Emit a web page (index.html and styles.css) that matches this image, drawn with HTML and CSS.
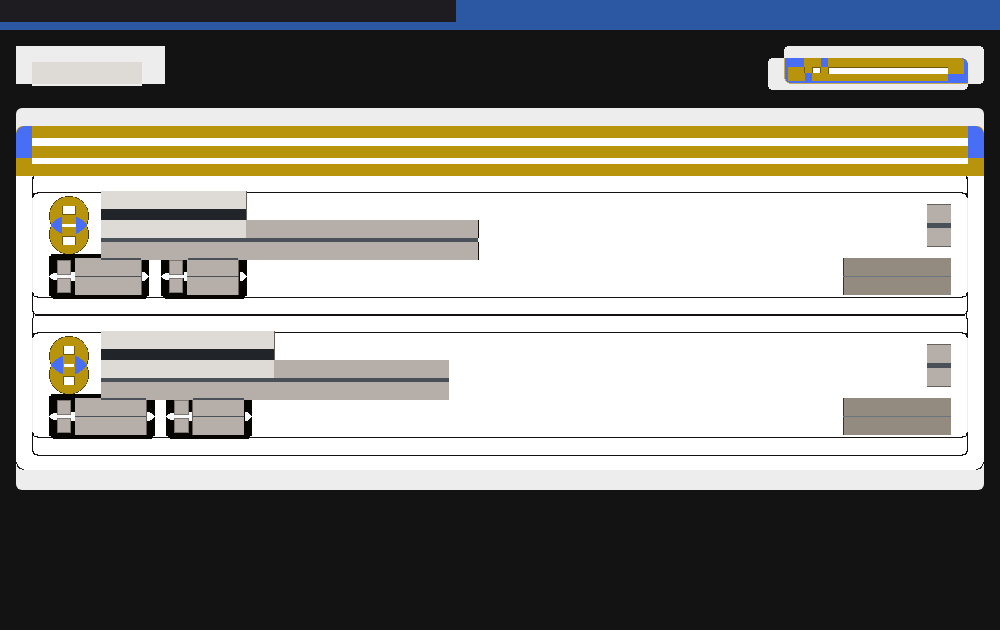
FILE: index.html
```html
<!DOCTYPE html>
<html lang="en">
<head>
<meta charset="utf-8">
<title>Overview</title>
<link rel="stylesheet" href="styles.css">
</head>
<body>
<div class="topbar"><div class="topbar-progress"></div></div>
<header class="header">
  <div class="title"><div class="title-block"></div></div>
  <svg class="action" width="216" height="44" viewBox="768 46 216 44">
    <rect class="surface" x="784" y="46" width="200" height="38" rx="5"/>
    <rect class="surface" x="768" y="58" width="200" height="32" rx="5"/>
    <path class="edge" d="M784 58H961Q968 58 968 66V84H792Q784 84 784 75Z"/>
    <path class="blue" d="M785 58H960Q967 58 968 65V83H792Q785 83 785 75Z"/>
    <path class="gold" d="M804 58h17v9h7v-9h133q3 1 3 3v13h-16v7h-136v-8h-7v8h-17v-14h16z"/>
    <path class="olive" d="M804 67h1v6h-1zM812 67h9v6h-9zM828 67h120v1h-119v6h-1z"/>
    <path class="white" d="M813 68h7v5h-7zM829 68h119v6h-119z"/>
  </svg>
</header>
<main class="panel">
  <div class="sheet">
    <div class="band">
      <div class="band-side"></div>
      <div class="band-lines"><i></i><i></i></div>
      <div class="band-side band-side-right"></div>
    </div>
    <div class="cards">
      <svg class="card" width="936" height="140" viewBox="32 176 936 140">
        <path class="side" d="M32 198h1v94h-1zM967 198h1v94h-1z"/>
        <path class="ink" d="M33 176h1v1h-1zM32 177h1v21h-1zM33 177h1v2h-1zM966 176h1v3h-1zM967 177h1v21h-1zM37 192H963v1H37zM33 193h5v1h-3v1h-1v2h-1zM967 193h-5v1h3v1h1v2h1zM32 292h1v20h-1zM967 292h1v20h-1zM37 297H963v1H37zM33 293h1v3h4v1h-4v-1h-1zM967 293h-1v3h-4v1h4v-1h1zM35 314H965v2H35zM33 311h1v2h1v1h-1v2h-1zM967 311h-1v2h-1v1h1v2h1z"/>
        <g>
          <circle class="rim" cx="69" cy="216" r="20"/><circle class="rim" cx="69" cy="234.5" r="20"/>
          <circle class="gold" cx="69" cy="216" r="19.400"/><circle class="gold" cx="69" cy="234.500" r="19.400"/>
          <path class="blue" d="M51 225q4-6 11-8.500v17.500q-7-3-11-9zM87 225q-4-6-11-8.500v17.500q7-3 11-9z"/>
          <path class="olive" d="M62 206h14v9h-14zM62 236h14v9h-14z"/>
          <path class="white" d="M63 206h12v8h-12zM62 224h14v3h-14zM63 237h12v8h-12z"/>
        </g>
        <path class="chip" d="M51 254h96v2h2v40h-2v2h-1v1h-93v-1h-2v-2h-2v-40h2zM163 254h82v2h2v40h-2v2h-1v1h-79v-1h-2v-2h-2v-40h2z"/>
        <path class="taupe small" d="M57.500 260.500h13v14h-13zM57.500 278.500h13v14h-13zM169.500 260.500h13v14h-13zM169.500 278.500h13v14h-13z"/>
        <path class="pale" d="M49 276h1v-1h1v-1h2v-1h4v2h14v-3h4v9h-4v-3h-14v2h-4v-1h-2v-1h-1v-1h-1zM142 272h3v1h1v1h1v1h1v1h1v1h-1v1h-1v1h-1v1h-1v1h-3zM161 276h1v-1h1v-1h2v-1h4v2h15v-3h3v9h-3v-3h-15v2h-4v-1h-2v-1h-1v-1h-1zM240 272h3v1h1v1h1v1h1v1h1v1h-1v1h-1v1h-1v1h-1v1h-3z"/>
        <path class="taupe" d="M75 258h66v37h-66zM187 258h52v37h-52z"/>
        <path class="graphite" d="M141 260h1v35h-1zM238 260h1v35h-1z"/>
        <path class="taupe" d="M246 220h232v18h-232zM101 242h377v18H101z"/>
        <path class="slate" d="M101 238h377v4H101zM75 276h66v1h-66zM187 276h52v1h-52zM101 258h40v2h-40zM188 258h50v2h-50z"/>
        <path class="light" d="M101 191h145v18H101zM101 220h145v18H101z"/>
        <path class="heading" d="M101 209h145v11H101z"/>
        <path class="graphite" d="M246 191h1v29h-1z"/>
        <path class="ink" d="M478 220h1v18h-1zM478 242h1v18h-1z"/>
        <path class="taupe" d="M927 204h24v43h-24z"/>
        <path class="graphite" d="M927 204h24v1h-24zM927 246h24v1h-24z"/>
        <path class="slate" d="M927 223h24v5h-24z"/>
        <path class="brown" d="M843 258h108v37H843z"/>
        <path class="edge-dark" d="M843 258h1v37h-1z"/>
        <path class="steel" d="M843 276h108v1H843z"/>
      </svg>
      <svg class="card" width="936" height="140" viewBox="32 176 936 140">
        <path class="side" d="M32 198h1v94h-1zM967 198h1v94h-1z"/>
        <path class="ink" d="M33 176h1v2h-1zM32 178h1v20h-1zM966 176h1v3h-1zM967 178h1v20h-1zM37 192H963v1H37zM33 193h5v1h-3v1h-1v2h-1zM967 193h-5v1h3v1h1v2h1zM32 292h1v20h-1zM967 292h1v20h-1zM37 297H963v1H37zM33 293h1v3h4v1h-4v-1h-1zM967 293h-1v3h-4v1h4v-1h1zM33 311h1v2h1v1h3v1h-4v-1h-1zM967 311h-1v2h-1v1h-3v1h4v-1h1zM37 315H963v1H37z"/>
        <g>
          <circle class="rim" cx="69" cy="216" r="20"/><circle class="rim" cx="69" cy="234.5" r="20"/>
          <circle class="gold" cx="69" cy="216" r="19.400"/><circle class="gold" cx="69" cy="234.500" r="19.400"/>
          <path class="blue" d="M51 225q4-6 12-9.500v19q-8-3.500-12-9.500zM87 225q-4-6-12-9.500v19q8-3.500 12-9.500z"/>
          <path class="olive" d="M63 206h12v9h-12zM63 236h12v9h-12z"/>
          <path class="white" d="M64 206h10v8h-10zM64 224h10v3h-10zM64 237h10v8h-10z"/>
        </g>
        <path class="chip" d="M51 254h102v2h2v40h-2v2h-1v1h-99v-1h-2v-2h-2v-40h2zM168 254h82v2h2v40h-2v2h-1v1h-79v-1h-2v-2h-2v-40h2z"/>
        <path class="taupe small" d="M57.500 260.500h13v14h-13zM57.500 278.500h13v14h-13zM174.500 260.500h14v14h-14zM174.500 278.500h14v14h-14z"/>
        <path class="pale" d="M49 276h1v-1h1v-1h2v-1h4v2h14v-3h4v9h-4v-3h-14v2h-4v-1h-2v-1h-1v-1h-1zM147 272h3v1h2v1h1v1h1v1h1v1h-1v1h-1v1h-1v1h-2v1h-3zM166 276h1v-1h1v-1h2v-1h4v2h15v-3h3v9h-3v-3h-15v2h-4v-1h-2v-1h-1v-1h-1zM245 272h3v1h1v1h1v1h1v1h1v1h-1v1h-1v1h-1v1h-1v1h-3z"/>
        <path class="taupe" d="M75 258h72v37h-72zM193 258h51v37h-51z"/>
        <path class="graphite" d="M146 260h1v35h-1zM192 260h1v35h-1z"/>
        <path class="taupe" d="M274 220h175v18H274zM101 242h348v18H101z"/>
        <path class="slate" d="M101 238h348v4H101zM75 276h71v1h-71zM193 276h51v1h-51zM101 258h45v2h-45zM193 258h51v2h-51z"/>
        <path class="light" d="M101 191h173v18H101zM101 220h173v18H101z"/>
        <path class="heading" d="M101 209h173v11H101z"/>
        <path class="graphite" d="M274 191h1v29h-1z"/>
        <path class="taupe" d="M927 204h24v43h-24z"/>
        <path class="graphite" d="M927 204h24v1h-24zM927 246h24v1h-24z"/>
        <path class="slate" d="M927 223h24v5h-24z"/>
        <path class="brown" d="M843 258h108v37H843z"/>
        <path class="edge-dark" d="M843 258h1v37h-1z"/>
        <path class="steel" d="M843 276h108v1H843z"/>
      </svg>
    </div>
    <svg class="sheet-foot" width="968" height="14" viewBox="0 0 968 14">
      <path class="corner" d="M.5 6q.5 7 7.500 7.500M967.500 6q-.5 7-7.500 7.500"/>
    </svg>
  </div>
</main>
</body>
</html>
```
FILE: styles.css
```css
* { box-sizing: border-box; }
body { margin: 0; min-height: 630px; background: #131313; font-family: "Liberation Sans", Arial, sans-serif; }
svg { display: block; shape-rendering: crispEdges; }
.topbar { height: 30px; background: #2b57a3; }
.topbar-progress { width: 456px; height: 22px; background: #1e1b21; }
.header { display: flex; justify-content: space-between; align-items: flex-start; height: 78px; padding: 16px 16px 0; }
.title { width: 149px; height: 38px; padding: 16px 0 0 16px; background: #ededed; }
.title-block { width: 110px; height: 24px; background: #dedbd6; border-bottom: 2px solid #ededed; }
.panel { height: 382px; margin: 0 16px; padding: 18px 0 20px; background: #ededed; border-radius: 6px; }
.sheet { height: 344px; background: #fff; border-radius: 8px 8px 8px 8px; }
.band { display: flex; height: 50px; background: #b8940d; border-radius: 7px 7px 0 0; overflow: hidden; }
.band-side { width: 16px; height: 32px; background: #486ef5; border-top-left-radius: 9px; }
.band-side-right { border-radius: 0 9px 0 0; }
.band-lines { flex: 1; padding-top: 12px; }
.band-lines i { display: block; height: 8px; background: #fff; }
.band-lines i:nth-child(2) { height: 6px; margin-top: 12px; }
.cards { display: grid; padding: 0 16px; }
.surface { fill: #ededed; }
.edge { fill: #c5aa55; }
.blue { fill: #486ef5; }
.gold { fill: #b8940d; }
.rim { fill: #49390b; }
.olive { fill: #705900; }
.white { fill: #fff; }
.side { fill: #ededf2; }
.ink { fill: #151110; }
.chip { fill: #070502; }
.taupe { fill: #b6afa9; }
.small { stroke: #7c766f; stroke-width: 1; }
.pale { fill: #f8f9fa; }
.slate { fill: #495057; }
.light { fill: #dedbd6; }
.heading { fill: #212529; }
.graphite { fill: #66615c; }
.brown { fill: #938a80; }
.edge-dark { fill: #35322f; }
.steel { fill: #6c757d; }
.corner { fill: none; stroke: #222; stroke-width: 1; }
```
